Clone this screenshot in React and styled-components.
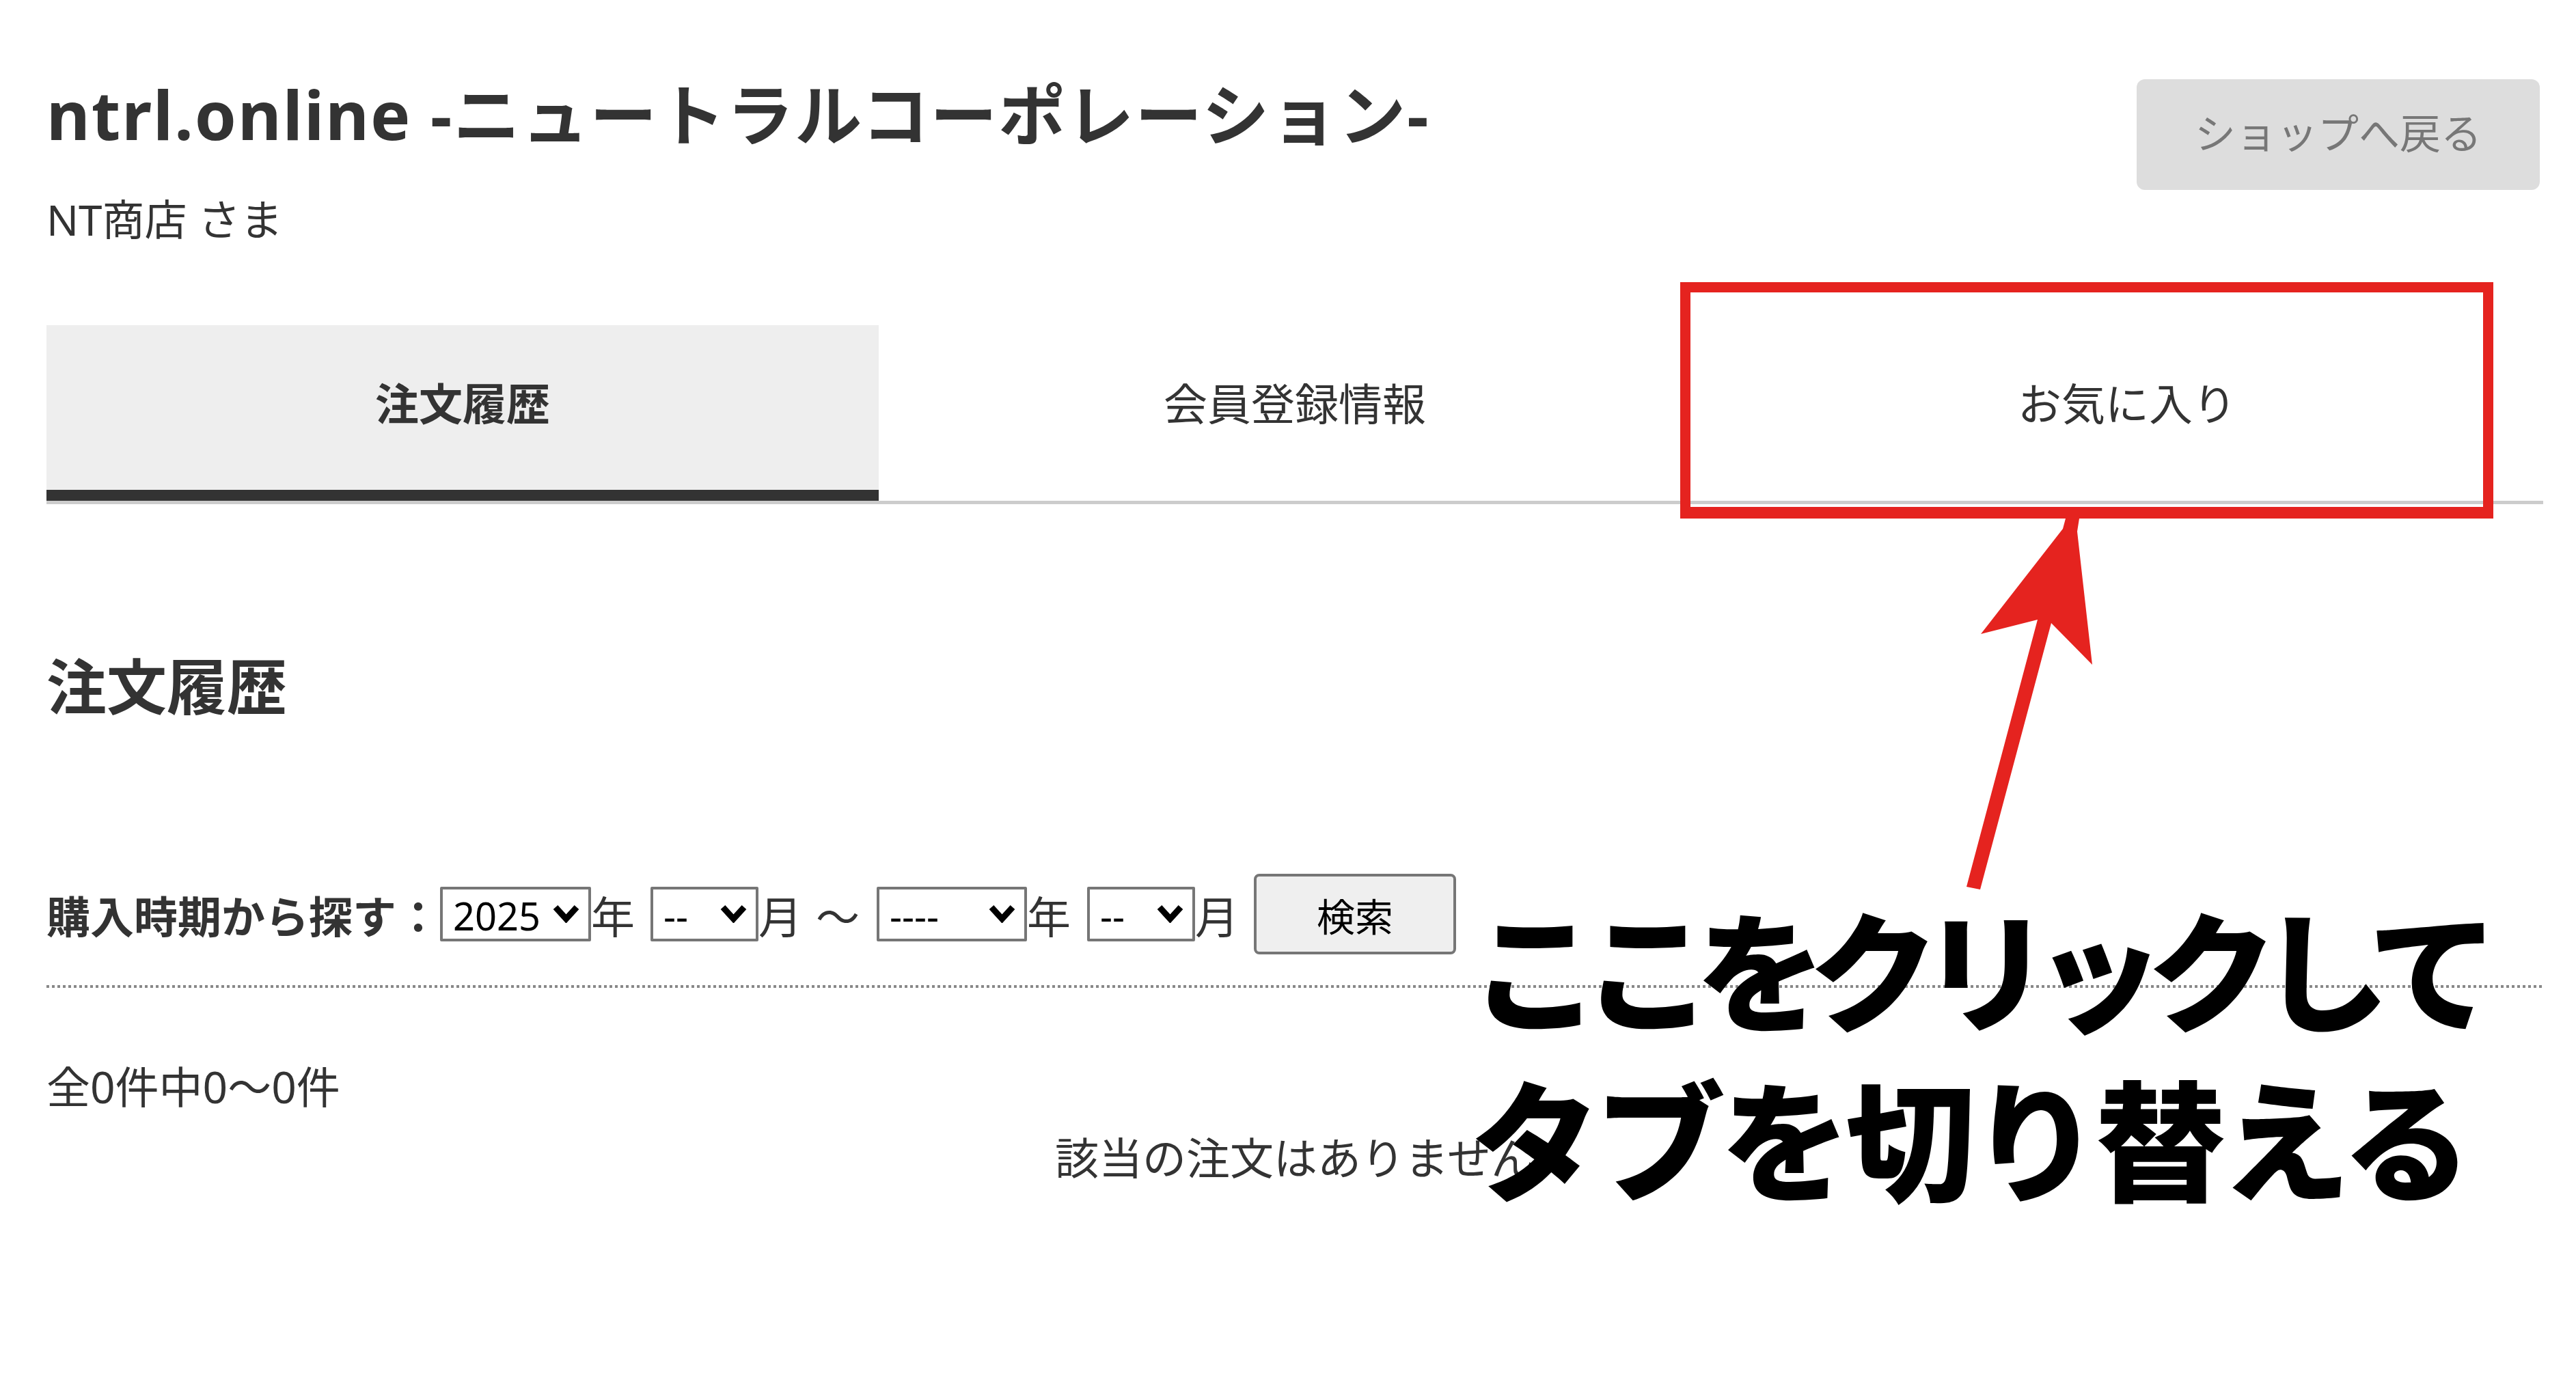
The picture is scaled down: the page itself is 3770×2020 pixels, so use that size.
import styled, { createGlobalStyle } from 'styled-components';

const GlobalStyle = createGlobalStyle`
  html, body {
    margin: 0;
    padding: 0;
    background: #fff;
  }
  body {
    font-family: "Noto Sans", "Noto Sans CJK JP", sans-serif;
    color: #333;
  }
`;

const Page = styled.div`
  position: relative;
  width: 3770px;
  min-height: 2020px;
  box-sizing: border-box;
  padding: 108px 48px 0 68px;
  overflow: hidden;
`;

const Header = styled.header`
  display: flex;
  justify-content: space-between;
  align-items: flex-start;
`;

const SiteTitle = styled.h1`
  margin: 0;
  font-size: 98px;
  line-height: 118px;
  font-weight: 700;
  letter-spacing: 2px;
`;

const CustomerName = styled.p`
  margin: 47px 0 0;
  font-size: 62px;
  line-height: 96px;
`;

const BackButton = styled.button`
  margin: 8px 5px 0 0;
  width: 590px;
  height: 162px;
  padding: 0 0 10px;
  border: none;
  border-radius: 12px;
  background: #ddd;
  color: #777;
  font-family: inherit;
  font-size: 60px;
  cursor: pointer;
`;

const TabList = styled.ul`
  display: flex;
  margin: 107px 0 0;
  padding: 0;
  list-style: none;
  border-bottom: 5px solid #ccc;
`;

const Tab = styled.li`
  flex: 1;
  height: 257px;
  box-sizing: border-box;
  display: flex;
  align-items: center;
  justify-content: center;
  padding-bottom: 18px;
  border-bottom: 16px solid ${(props) => (props.$active ? '#333' : 'transparent')};
  background: ${(props) => (props.$active ? '#eee' : 'transparent')};
  font-size: 64px;
  font-weight: ${(props) => (props.$active ? 700 : 400)};
  cursor: pointer;
`;

const SectionTitle = styled.h2`
  margin: 200px 0 0;
  font-size: 88px;
  line-height: 132px;
  font-weight: 700;
`;

const SearchForm = styled.form`
  display: flex;
  align-items: center;
  margin-top: 209px;
  font-size: 64px;
`;

const SearchLabel = styled.span`
  font-weight: 700;
`;

const SelectWrap = styled.span`
  position: relative;
  display: inline-flex;
`;

const Select = styled.select`
  appearance: none;
  width: ${(props) => props.$width}px;
  height: 80px;
  box-sizing: border-box;
  margin: 0;
  padding: 0 0 0 15px;
  border: 4px solid #767676;
  border-radius: 2px;
  background: #fff;
  color: #000;
  font-family: "Noto Sans", sans-serif;
  font-size: 56px;
`;

const Chevron = styled.svg`
  position: absolute;
  right: 16px;
  top: 25px;
  pointer-events: none;
`;

const Unit = styled.span`
  margin-right: ${(props) => props.$gap || 0}px;
`;

const SearchButton = styled.button`
  width: 296px;
  height: 118px;
  box-sizing: border-box;
  border: 4px solid #767676;
  border-radius: 8px;
  background: #efefef;
  color: #000;
  font-family: "Noto Sans CJK JP", sans-serif;
  font-size: 56px;
`;

const Divider = styled.div`
  height: 4px;
  margin-top: 45px;
  background: repeating-linear-gradient(to right, #888 0 4px, transparent 4px 8px);
`;

const ResultCount = styled.p`
  margin: 97px 0 0;
  font-size: 64px;
  line-height: 96px;
`;

const EmptyMessage = styled.p`
  margin: 8px 0 0;
  text-align: center;
  font-size: 64px;
  line-height: 96px;
`;

const HighlightBox = styled.div`
  position: absolute;
  left: 2459px;
  top: 413px;
  width: 1190px;
  height: 346px;
  box-sizing: border-box;
  border: 15px solid #e5231f;
  border-bottom-width: 17px;
  pointer-events: none;
`;

const ArrowLayer = styled.svg`
  position: absolute;
  left: 0;
  top: 0;
  pointer-events: none;
`;

const Callout = styled.div`
  position: absolute;
  left: 2152px;
  top: 1290px;
  font-family: "Noto Sans CJK JP", sans-serif;
  font-weight: 900;
  font-size: 190px;
  line-height: 248px;
  color: #000;
  white-space: nowrap;
  pointer-events: none;
`;

const CalloutLine = styled.div`
  letter-spacing: ${(props) => props.$spacing}px;
`;

const Dropdown = ({ width, value, options }) => (
  <SelectWrap>
    <Select $width={width} defaultValue={value}>
      {options.map((o) => (
        <option key={o}>{o}</option>
      ))}
    </Select>
    <Chevron width="41" height="28" viewBox="0 0 41 28">
      <polyline points="5,5 20.5,22 36,5" fill="none" stroke="#000" strokeWidth="9" />
    </Chevron>
  </SelectWrap>
);

const tabs = ['注文履歴', '会員登録情報', 'お気に入り'];

const App = () => (
  <>
    <GlobalStyle />
    <Page>
      <Header>
        <div>
          <SiteTitle>ntrl.online -ニュートラルコーポレーション-</SiteTitle>
          <CustomerName>NT商店 さま</CustomerName>
        </div>
        <BackButton type="button">ショップへ戻る</BackButton>
      </Header>

      <TabList>
        {tabs.map((t, i) => (
          <Tab key={t} $active={i === 0}>
            {t}
          </Tab>
        ))}
      </TabList>

      <SectionTitle>注文履歴</SectionTitle>

      <SearchForm onSubmit={(e) => e.preventDefault()}>
        <SearchLabel>購入時期から探す：</SearchLabel>
        <Dropdown width={221} value="2025" options={['2025', '2024', '2023']} />
        <Unit $gap={23}>年</Unit>
        <Dropdown width={158} value="--" options={['--', '1', '2', '3']} />
        <Unit $gap={20}>月</Unit>
        <Unit $gap={25}>～</Unit>
        <Dropdown width={220} value="----" options={['----', '2025', '2024']} />
        <Unit $gap={24}>年</Unit>
        <Dropdown width={158} value="--" options={['--', '1', '2', '3']} />
        <Unit $gap={22}>月</Unit>
        <SearchButton type="submit">検索</SearchButton>
      </SearchForm>

      <Divider />

      <ResultCount>全0件中0～0件</ResultCount>
      <EmptyMessage>該当の注文はありません</EmptyMessage>

      <HighlightBox />
      <ArrowLayer width="3770" height="2020" viewBox="0 0 3770 2020">
        <polygon
          fill="#e5231f"
          points="3023,759 3043,759 3040,778 3062,973 3002,912 2898,1302 2878,1298 2982,907 2899,928 3019,774"
        />
      </ArrowLayer>
      <Callout>
        <CalloutLine $spacing={-25}>ここをクリックして</CalloutLine>
        <CalloutLine $spacing={-7}>タブを切り替える</CalloutLine>
      </Callout>
    </Page>
  </>
);

export default App;
